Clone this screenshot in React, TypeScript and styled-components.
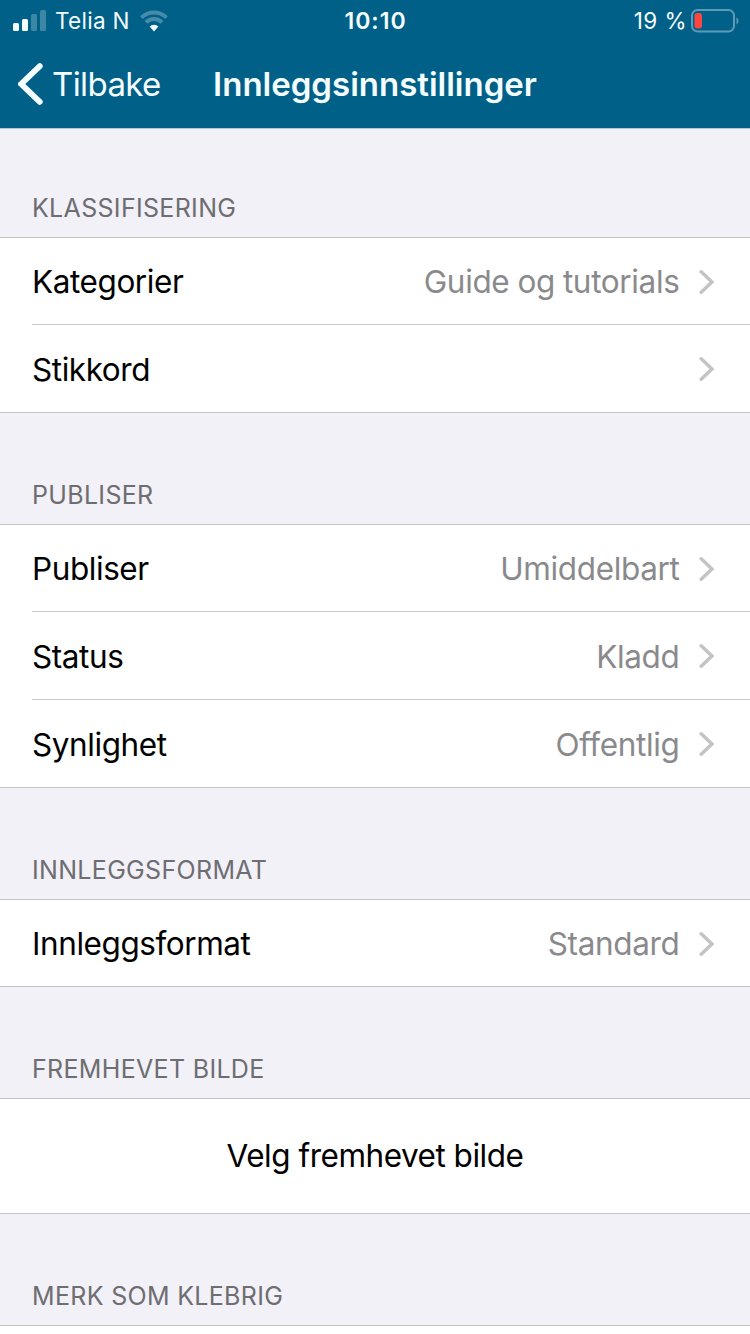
import React from "react";
import styled, { createGlobalStyle } from "styled-components";

const GlobalStyle = createGlobalStyle`
  *, *::before, *::after { box-sizing: border-box; }
  html, body { margin: 0; padding: 0; background: #f2f1f7; }
  body { font-family: Inter, "Liberation Sans", sans-serif; overflow: hidden; }
`;

const Screen = styled.main`
  width: 750px;
  height: 1334px;
  overflow: hidden;
  display: flex;
  flex-direction: column;
  background: #f2f1f7;
  color: #000;
`;

const Header = styled.header`
  height: 129px;
  flex: none;
  background: #006088;
  color: #f4fdff;
  border-bottom: 1px solid #b9c6d2;
`;

const StatusBar = styled.div`
  height: 40px;
  display: grid;
  grid-template-columns: 1fr auto 1fr;
  align-items: center;
  padding: 1px 12px 0 13px;
  font-size: 22.5px;
  line-height: 40px;
`;

const StatusSide = styled.div<{ $end?: boolean }>`
  display: flex;
  align-items: center;
  justify-content: ${(p) => (p.$end ? "flex-end" : "flex-start")};
  margin-right: ${(p) => (p.$end ? -1 : 0)}px;
`;

const Carrier = styled.span`
  margin: 0 10px 0 9px;
  letter-spacing: 0.3px;
`;

const Clock = styled.span`
  font-size: 23px;
  font-weight: 600;
  letter-spacing: 1px;
`;

const Percent = styled.span`
  margin-right: 4px;
  letter-spacing: 0.45px;
`;

const NavBar = styled.nav`
  height: 87px;
  display: grid;
  grid-template-columns: 1fr auto 1fr;
  align-items: center;
  padding: 0 18px;
  line-height: 86px;
`;

const BackButton = styled.a`
  display: flex;
  align-items: center;
  gap: 9px;
  font-size: 33px;
  letter-spacing: -0.6px;
`;

const Title = styled.h1`
  margin: 0;
  font-size: 33px;
  font-weight: 600;
  letter-spacing: 0;
`;

const SectionTitle = styled.h2<{ $first?: boolean }>`
  margin: 0;
  flex: none;
  height: ${(p) => (p.$first ? 108 : 111)}px;
  padding: 0 32px 13px;
  display: flex;
  align-items: flex-end;
  font-size: 25px;
  line-height: 32px;
  font-weight: 400;
  letter-spacing: 0.32px;
  color: #6d6d72;
`;

const Group = styled.div`
  flex: none;
  background: #fff;
  border-top: 1px solid #c5c4c9;
  border-bottom: 1px solid #c5c4c9;
`;

const Row = styled.div`
  height: 88px;
  margin-left: 32px;
  padding: 1px 35px 0 0;
  display: flex;
  align-items: center;
  border-top: 1px solid #c8c7cc;
  font-size: 31.5px;

  &:first-child {
    height: 86px;
    border-top: 0;
  }
`;

const Label = styled.span`
  flex: 1;
  letter-spacing: -0.43px;
`;

const Value = styled.span`
  color: #8a8a8d;
  margin-right: 19.5px;
  letter-spacing: -0.35px;
  word-spacing: -0.5px;
`;

const ActionRow = styled.div`
  height: 114px;
  padding-bottom: 1px;
  display: flex;
  align-items: center;
  justify-content: center;
  font-size: 31.5px;
  letter-spacing: -0.48px;
`;

const SignalIcon = () => (
  <svg width="33" height="22" viewBox="0 0 33 22" fill="#f4fdff">
    <rect x="0" y="13" width="6" height="8" rx="1.5" />
    <rect x="9" y="9" width="6" height="12" rx="1.5" />
    <rect x="18" y="4" width="6" height="17" rx="1.5" opacity="0.25" />
    <rect x="27" y="0" width="6" height="21" rx="1.5" opacity="0.25" />
  </svg>
);

const WifiIcon = () => (
  <svg width="28" height="22" viewBox="0 0 28 22" fill="none">
    <g stroke="#f4fdff" strokeWidth="4" opacity="0.28">
      <path d="M1.5 7.6a18 18 0 0 1 25 0" />
      <path d="M6 12.4a11.4 11.4 0 0 1 16 0" />
    </g>
    <path d="M9.6 16.6a6.4 6.4 0 0 1 8.8 0L14 21.4z" fill="#f4fdff" />
  </svg>
);

const BatteryIcon = () => (
  <svg width="48" height="24" viewBox="0 0 48 24" fill="none">
    <rect x="1" y="1" width="42" height="21.5" rx="5.5" stroke="#5f9bb9" strokeWidth="2" />
    <rect x="3.5" y="4" width="7.5" height="15.5" rx="3" fill="#ff453f" />
    <path d="M45.5 8.2c2.7 1.6 2.7 5.6 0 7.2z" fill="#5f9bb9" />
  </svg>
);

const BackIcon = () => (
  <svg width="25" height="42" viewBox="0 0 25 42" fill="none">
    <path d="M21.8 3.2 3.2 21l18.6 17.8" stroke="#f4fdff" strokeWidth="5.8" strokeLinecap="round" strokeLinejoin="miter" />
  </svg>
);

const Chevron = () => (
  <svg width="16" height="26" viewBox="0 0 16 26" fill="none">
    <path d="M2.2 2.8 12.9 13 2.2 23.2" stroke="#c4c4c6" strokeWidth="3.5" strokeLinecap="round" />
  </svg>
);

const sections = [
  {
    title: "KLASSIFISERING",
    rows: [
      { label: "Kategorier", value: "Guide og tutorials" },
      { label: "Stikkord", value: "" },
    ],
  },
  {
    title: "PUBLISER",
    rows: [
      { label: "Publiser", value: "Umiddelbart" },
      { label: "Status", value: "Kladd" },
      { label: "Synlighet", value: "Offentlig" },
    ],
  },
  { title: "INNLEGGSFORMAT", rows: [{ label: "Innleggsformat", value: "Standard" }] },
];

export default function App() {
  return (
    <Screen>
      <GlobalStyle />
      <Header>
        <StatusBar>
          <StatusSide>
            <SignalIcon />
            <Carrier>Telia N</Carrier>
            <WifiIcon />
          </StatusSide>
          <Clock>10:10</Clock>
          <StatusSide $end>
            <Percent>19 %</Percent>
            <BatteryIcon />
          </StatusSide>
        </StatusBar>
        <NavBar>
          <BackButton>
            <BackIcon />
            Tilbake
          </BackButton>
          <Title>Innleggsinnstillinger</Title>
        </NavBar>
      </Header>
      {sections.map((section, i) => (
        <React.Fragment key={section.title}>
          <SectionTitle $first={i === 0}>{section.title}</SectionTitle>
          <Group>
            {section.rows.map((row) => (
              <Row key={row.label}>
                <Label>{row.label}</Label>
                {row.value && <Value>{row.value}</Value>}
                <Chevron />
              </Row>
            ))}
          </Group>
        </React.Fragment>
      ))}
      <SectionTitle>FREMHEVET BILDE</SectionTitle>
      <Group>
        <ActionRow>Velg fremhevet bilde</ActionRow>
      </Group>
      <SectionTitle>MERK SOM KLEBRIG</SectionTitle>
      <Group>
        <Row />
      </Group>
    </Screen>
  );
}
